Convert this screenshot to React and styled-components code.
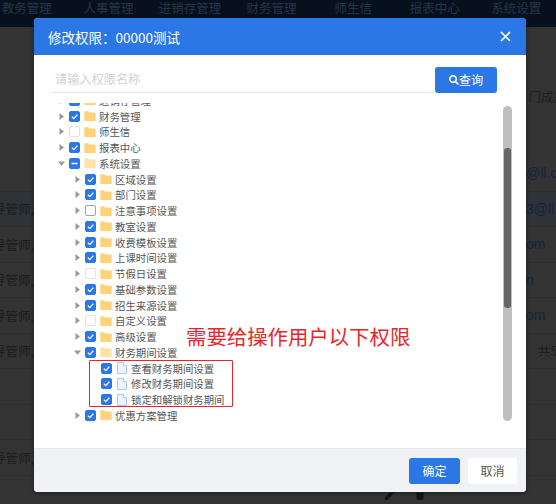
import React from 'react';
import styled, { createGlobalStyle } from 'styled-components';
import { FaSearch, FaPen, FaTrash } from 'react-icons/fa';

const GlobalStyle = createGlobalStyle`
  html, body { margin: 0; padding: 0; background: #333; }
  * { box-sizing: border-box; }
  body { font-family: "Noto Sans CJK SC", "Noto Sans", sans-serif; }
`;

const Page = styled.div`
  position: relative;
  width: 556px;
  height: 504px;
  overflow: hidden;
  background: #333333;
`;

const Nav = styled.nav`
  display: flex;
  height: 27px;
  margin-left: -14px;
  background: #07111e;
`;

const NavItem = styled.div`
  width: 81.6px;
  flex: none;
  text-align: center;
  font-size: 12.5px;
  line-height: 16px;
  color: #25344a;
`;

const Table = styled.div`
  padding-top: 53px;
`;

const TopNote = styled.div`
  height: 76px;
  padding-top: 8px;
  text-align: right;
  font-size: 12.5px;
  line-height: 18px;
  color: #1f1f1f;
  margin-right: -10px;
`;

const Row = styled.div`
  display: grid;
  grid-template-columns: 533px 1fr;
  align-items: center;
  height: 35.5px;
  margin-left: -7px;
  border-bottom: 1px solid #2f2f2f;
  font-size: 12.5px;
  white-space: nowrap;
  background: ${(p) => (p.$active ? '#2e3338' : 'transparent')};
`;

const Teacher = styled.span`
  color: #1d1d1d;
`;

const Email = styled.span`
  color: #17233f;
  font-family: "Liberation Sans", sans-serif;
  font-size: 14px;
`;

const Total = styled.span`
  margin-left: 12px;
  color: #1f1f1f;
`;

const RowTools = styled.div`
  display: flex;
  gap: 20px;
  margin-left: 385px;
  padding-top: 14px;
  color: #161616;
  font-size: 10px;
`;

const Modal = styled.section`
  position: absolute;
  left: 34px;
  top: 18px;
  width: 492px;
  height: 474px;
  display: flex;
  flex-direction: column;
  border-radius: 4px;
  overflow: hidden;
  background: #fff;
  box-shadow: 0 1px 4px rgba(0, 0, 0, 0.4);
`;

const Header = styled.header`
  display: flex;
  align-items: center;
  justify-content: space-between;
  height: 37px;
  flex: none;
  padding: 0 15px 0 14px;
  background: #2a77e5;
  color: #fff;
`;

const Title = styled.h2`
  margin: 0;
  font-size: 13.5px;
  font-weight: 400;
`;

const Close = styled.svg`
  width: 11px;
  height: 11px;
  stroke: #fff;
  stroke-width: 1.7;
  fill: none;
`;

const Body = styled.div`
  flex: 1;
  min-height: 0;
  position: relative;
  display: flex;
  flex-direction: column;
`;

const SearchRow = styled.div`
  display: flex;
  align-items: stretch;
  height: 26px;
  margin: 12px 29px 10px 16px;
  flex: none;
`;

const SearchInput = styled.div`
  flex: 1;
  padding: 2px 5px 0;
  border-bottom: 1px solid #e8e8e8;
  font-size: 12.2px;
  line-height: 20px;
  color: #d2d2d2;
`;

const QueryButton = styled.button`
  width: 62px;
  display: flex;
  align-items: center;
  justify-content: center;
  border: 0;
  border-radius: 3px;
  padding: 0;
  background: #2a77e5;
  color: #fff;
  font: inherit;
  font-size: 12.2px;
`;

const TreeArea = styled.div`
  flex: 1;
  min-height: 0;
  display: flex;
`;

const TreeScroll = styled.div`
  flex: 1;
  overflow: hidden;
`;

const TreeList = styled.ul`
  list-style: none;
  margin: -10.4px 0 0;
  padding: 0;
`;

const TreeRow = styled.li`
  display: flex;
  align-items: center;
  height: 15.75px;
  padding-left: ${(p) => 24 + p.$level * 16}px;
`;

const Arrow = styled.span`
  width: 11px;
  flex: none;
  display: flex;
  justify-content: flex-start;
  color: #9a9a9a;
`;

const Box = styled.span`
  width: 11px;
  height: 11px;
  flex: none;
  border-radius: 2px;
  display: flex;
  align-items: center;
  justify-content: center;
  background: ${(p) => (p.$state === 'checked' || p.$state === 'partial' ? '#2a77e5' : '#fff')};
  border: 1px solid
    ${(p) => {
      if (p.$state === 'empty') return '#e2e2e2';
      if (p.$state === 'outline') return '#8fa6c6';
      return '#2a77e5';
    }};
`;

const NodeIcon = styled.svg`
  width: 12px;
  height: 12px;
  flex: none;
  margin-left: 4px;
`;

const Label = styled.span`
  margin-left: 3px;
  font-size: 10.4px;
  line-height: 15px;
  color: #555;
  white-space: nowrap;
`;

const Track = styled.div`
  width: 9px;
  height: 315px;
  flex: none;
  margin: 3px 14px 0 0;
  padding-top: 42px;
  border-radius: 5px;
  background: #bfbfbf;
`;

const Thumb = styled.div`
  width: 7px;
  height: 160px;
  margin: 0 auto;
  border-radius: 3px;
  background: #666;
`;

const Footer = styled.footer`
  display: flex;
  justify-content: flex-end;
  align-items: center;
  gap: 8px;
  height: 44px;
  flex: none;
  padding: 0 9px 0 0;
  background: #f0f2f6;
  border-top: 1px solid #e9ebef;
`;

const FootButton = styled.button`
  width: ${(p) => (p.$primary ? 51 : 49)}px;
  height: 26px;
  padding: 0;
  border: 0;
  border-radius: 3px;
  background: ${(p) => (p.$primary ? '#2a77e5' : '#fff')};
  color: ${(p) => (p.$primary ? '#fff' : '#555')};
  font: inherit;
  font-size: 12px;
`;

const Callout = styled.div`
  position: absolute;
  left: 152px;
  top: 267px;
  font-size: 20.4px;
  line-height: 28px;
  color: #e8262a;
  white-space: nowrap;
`;

const Highlight = styled.div`
  position: absolute;
  left: 55px;
  top: 305px;
  width: 144px;
  height: 47px;
  border: 1.5px solid #e8262a;
  border-radius: 1px;
`;

const navItems = ['教务管理', '人事管理', '进销存管理', '财务管理', '师生信', '报表中心', '系统设置'];

const rows = [
  { email: '@ll.c' },
  { teacher: true, email: '3@ll.', active: true },
  { teacher: true, email: 'om' },
  { teacher: true, email: 'n' },
  { teacher: true, email: 'om' },
  { teacher: true, total: '共5' },
  {},
  {},
  { teacher: true },
];

const tree = [
  { level: 0, name: '进销存管理', state: 'checked' },
  { level: 0, name: '财务管理', state: 'checked' },
  { level: 0, name: '师生信', state: 'empty' },
  { level: 0, name: '报表中心', state: 'checked' },
  { level: 0, name: '系统设置', state: 'partial', open: true },
  { level: 1, name: '区域设置', state: 'checked' },
  { level: 1, name: '部门设置', state: 'checked' },
  { level: 1, name: '注意事项设置', state: 'outline' },
  { level: 1, name: '教室设置', state: 'checked' },
  { level: 1, name: '收费模板设置', state: 'checked' },
  { level: 1, name: '上课时间设置', state: 'checked' },
  { level: 1, name: '节假日设置', state: 'empty' },
  { level: 1, name: '基础参数设置', state: 'checked' },
  { level: 1, name: '招生来源设置', state: 'checked' },
  { level: 1, name: '自定义设置', state: 'empty' },
  { level: 1, name: '高级设置', state: 'checked' },
  { level: 1, name: '财务期间设置', state: 'checked', open: true },
  { level: 2, name: '查看财务期间设置', state: 'checked', leaf: true },
  { level: 2, name: '修改财务期间设置', state: 'checked', leaf: true },
  { level: 2, name: '锁定和解锁财务期间', state: 'checked', leaf: true },
  { level: 1, name: '优惠方案管理', state: 'checked' },
];

const Caret = ({ open }) => (
  <svg width="7" height="7" viewBox="0 0 7 7" fill="currentColor">
    {open ? <path d="M0 1.5h7L3.5 6z" /> : <path d="M1.5 0v7L6 3.5z" />}
  </svg>
);

const Tick = ({ state }) => {
  if (state === 'checked') {
    return (
      <svg width="9" height="9" viewBox="0 0 9 9" fill="none" stroke="#fff" strokeWidth="1.3">
        <path d="M1.8 4.6l2 2 3.6-4" />
      </svg>
    );
  }
  if (state === 'partial') {
    return (
      <svg width="9" height="9" viewBox="0 0 9 9" stroke="#fff" strokeWidth="1.5">
        <path d="M1.5 4.5h6" />
      </svg>
    );
  }
  return null;
};

const Folder = ({ open }) => (
  <NodeIcon viewBox="0 0 12 12">
    <path
      d="M0.3 2c0-.4.3-.7.7-.7h3l1.2 1.3h5.8c.4 0 .7.3.7.7v6.9c0 .4-.3.7-.7.7H1c-.4 0-.7-.3-.7-.7z"
      fill={open ? '#fee3a8' : '#fdd27a'}
    />
  </NodeIcon>
);

const Doc = () => (
  <NodeIcon viewBox="0 0 12 12">
    <path d="M1.5 0.5h6l3 3v8h-9z" fill="#eef4fd" stroke="#a6c3ec" strokeWidth="0.9" />
    <path d="M7.5 0.5v3h3" fill="#fff" stroke="#a6c3ec" strokeWidth="0.8" />
  </NodeIcon>
);

const App = () => (
  <Page>
    <GlobalStyle />
    <Nav>
      {navItems.map((item) => (
        <NavItem key={item}>{item}</NavItem>
      ))}
    </Nav>
    <Table>
      <TopNote>门成员</TopNote>
      {rows.map((row, i) => (
        <Row key={i} $active={row.active}>
          <Teacher>{row.teacher ? '导管师,系统' : ''}</Teacher>
          {row.email && <Email>{row.email}</Email>}
          {row.total && <Total>{row.total}</Total>}
        </Row>
      ))}
      <RowTools>
        <FaPen />
        <FaTrash />
      </RowTools>
    </Table>

    <Modal>
      <Header>
        <Title>修改权限：00000测试</Title>
        <Close viewBox="0 0 11 11">
          <path d="M1 1l9 9M10 1l-9 9" />
        </Close>
      </Header>
      <Body>
        <SearchRow>
          <SearchInput>请输入权限名称</SearchInput>
          <QueryButton>
            <FaSearch size={10} />
            查询
          </QueryButton>
        </SearchRow>
        <TreeArea>
          <TreeScroll>
            <TreeList>
              {tree.map((node) => (
                <TreeRow key={node.name} $level={node.level}>
                  <Arrow>{!node.leaf && <Caret open={node.open} />}</Arrow>
                  <Box $state={node.state}>
                    <Tick state={node.state} />
                  </Box>
                  {node.leaf ? <Doc /> : <Folder open={node.open} />}
                  <Label>{node.name}</Label>
                </TreeRow>
              ))}
            </TreeList>
          </TreeScroll>
          <Track>
            <Thumb />
          </Track>
        </TreeArea>
        <Callout>需要给操作用户以下权限</Callout>
        <Highlight />
      </Body>
      <Footer>
        <FootButton $primary>确定</FootButton>
        <FootButton>取消</FootButton>
      </Footer>
    </Modal>
  </Page>
);

export default App;
